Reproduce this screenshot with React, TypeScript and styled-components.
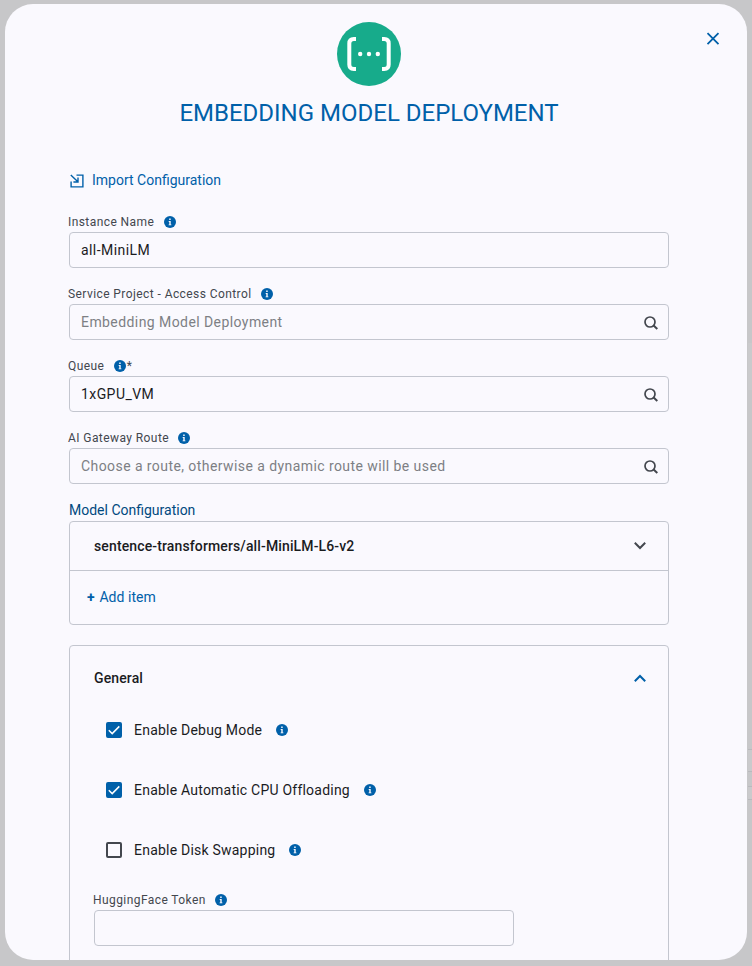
import React from "react";
import styled, { createGlobalStyle } from "styled-components";

const GlobalStyle = createGlobalStyle`
  * { box-sizing: border-box; }
  html, body { margin: 0; height: 966px; overflow: hidden; background: #c7c7ca; }
  body { font-family: Roboto, sans-serif; color: #1a1c1e; }
  svg { display: block; flex: none; }
`;

const Backdrop = styled.div`
  position: relative;
  height: 966px;
  padding: 4px 5px 6px;
  background: #c7c7c9;
`;

const PageStrip = styled.div<{ $top: number; $height: number; $lined?: boolean }>`
  position: absolute;
  right: 0;
  width: 4px;
  top: ${(p) => p.$top}px;
  height: ${(p) => p.$height}px;
  background: #cacacc;
  border: 0 solid #b9b9bd;
  border-width: ${(p) => (p.$lined ? "1px 0" : "0")};
`;

const Dialog = styled.main`
  position: relative;
  height: 956px;
  padding: 18px 78px 0 64px;
  border-radius: 28px;
  background: #faf9fe;
  overflow: hidden;
`;

const CloseButton = styled.button`
  position: absolute;
  top: 23px;
  right: 22px;
  padding: 0;
  border: 0;
  background: none;
  color: #0060a9;
`;

const Header = styled.header`
  display: flex;
  flex-direction: column;
  align-items: center;
`;

const Title = styled.h1`
  margin: 11px 0 0;
  font-size: 24px;
  line-height: 32px;
  font-weight: 400;
  color: #0060a9;
  white-space: nowrap;
`;

const ImportLink = styled.button`
  display: flex;
  align-items: center;
  height: 20px;
  margin: 41px 0 0;
  padding: 0 0 0 1px;
  gap: 8px;
  border: 0;
  background: none;
  font: 400 14px/20px Roboto, sans-serif;
  color: #0060a9;
  svg { margin-top: 2px; }
`;

const FieldGroup = styled.div<{ $first?: boolean; $width?: number }>`
  width: ${(p) => (p.$width ? `${p.$width}px` : "auto")};
  margin-top: ${(p) => (p.$first ? 24 : 18)}px;
`;

const Label = styled.div`
  display: flex;
  align-items: center;
  height: 16px;
  margin: 0 0 2px -1px;
  font-size: 12px;
  line-height: 16px;
  letter-spacing: 0.42px;
  color: #43474e;
  white-space: nowrap;
  svg { margin-left: 9.4px; }
`;

const Required = styled.span`
  margin-left: 1px;
`;

const InputBox = styled.div<{ $muted?: boolean }>`
  display: flex;
  align-items: center;
  justify-content: space-between;
  height: 36px;
  padding: 0 9px 0 11px;
  border: 1px solid #c3c6cf;
  border-radius: 4px;
  font-size: 14px;
  line-height: 20px;
  letter-spacing: 0.425px;
  color: ${(p) => (p.$muted ? "#7d7f84" : "#1a1c1e")};
  svg { margin-top: 1px; }
`;

const SectionTitle = styled.h2`
  margin: 16px 0 1px;
  font-size: 14px;
  line-height: 20px;
  font-weight: 400;
  color: #00497f;
`;

const Card = styled.section<{ $gap?: number }>`
  margin-top: ${(p) => p.$gap ?? 0}px;
  border: 1px solid #c3c6cf;
  border-radius: 4px;
`;

const CardHeader = styled.div<{ $height: number }>`
  display: flex;
  align-items: center;
  justify-content: space-between;
  height: ${(p) => p.$height}px;
  padding: 0 22px 0 24px;
  font-size: 14px;
  font-weight: 500;
  letter-spacing: 0.13px;
`;

const AddRow = styled.div`
  display: flex;
  align-items: center;
  height: 54px;
  padding: 0 17px 2px;
  border-top: 1px solid #c3c6cf;
  font-size: 14px;
  letter-spacing: 0.05px;
  color: #0060a9;
`;

const Plus = styled.span`
  width: 12.4px;
  font-weight: 700;
`;

const GeneralCard = styled(Card)`
  height: 380px;
`;

const Options = styled.div`
  display: flex;
  flex-direction: column;
  gap: 40px;
  padding: 10px 0 0 36px;
`;

const Option = styled.label`
  display: flex;
  align-items: center;
  height: 20px;
  font-size: 14px;
  letter-spacing: 0.22px;
  white-space: nowrap;
`;

const OptionText = styled.span`
  margin: 0 14px 0 12px;
`;

const Check = styled.span<{ $on?: boolean }>`
  display: grid;
  place-items: center;
  width: 16px;
  height: 16px;
  border-radius: 2px;
  border: 2px solid ${(p) => (p.$on ? "#0060a9" : "#43474e")};
  background: ${(p) => (p.$on ? "#0060a9" : "transparent")};
`;

const TokenArea = styled.div`
  padding: 14px 0 0 24px;
`;

const InfoIcon = () => (
  <svg width="12" height="12" viewBox="0 0 12 12">
    <circle cx="6" cy="6" r="6" fill="#0060a9" />
    <rect x="5.2" y="2.5" width="1.5" height="1.6" rx=".2" fill="#faf9fe" />
    <path d="M4.7 5.1h2v3.4h.7v.8H4.6v-.8h.7V5.9h-.6z" fill="#faf9fe" />
  </svg>
);

const SearchIcon = () => (
  <svg width="16" height="16" viewBox="0 0 16 16" fill="none" stroke="#43474e">
    <circle cx="7" cy="7" r="5" strokeWidth="1.7" />
    <path d="M10.6 10.6 14.3 14.1" strokeWidth="2" />
  </svg>
);

const Chevron = ({ up }: { up?: boolean }) => (
  <svg width="12" height="8" viewBox="0 0 12 8" fill="none">
    <path
      d={up ? "M.8 7.2 6 2 11.2 7.2" : "M.8 .8 6 6 11.2 .8"}
      stroke={up ? "#0060a9" : "#43474e"}
      strokeWidth="2"
    />
  </svg>
);

const Logo = () => (
  <svg width="64" height="64" viewBox="0 0 64 64">
    <circle cx="32" cy="32" r="32" fill="#17ab8b" />
    <path d="M19 17h-2.2q-4.5 0-4.5 4.5v21q0 4.5 4.5 4.5H19M45 17h2.2q4.5 0 4.5 4.5v21q0 4.5-4.5 4.5H45" fill="none" stroke="#fff" strokeWidth="4" />
    <g fill="#fff">
      <circle cx="23.2" cy="32" r="2.2" />
      <circle cx="32" cy="32" r="2.2" />
      <circle cx="40.8" cy="32" r="2.2" />
    </g>
  </svg>
);

const ImportIcon = () => (
  <svg width="14" height="14" viewBox="0 0 14 14" fill="none" stroke="#0060a9" strokeWidth="1.4">
    <path d="M6.5 1.1h6.4v11.8H1.1V7.4M.8.9 7.6 7.6M8 3.5V8H3.4" />
  </svg>
);

type FieldProps = {
  label: string;
  value?: string;
  muted?: boolean;
  search?: boolean;
  required?: boolean;
  first?: boolean;
  width?: number;
};

const Field = ({ label, value, muted, search, required, first, width }: FieldProps) => (
  <FieldGroup $first={first} $width={width}>
    <Label>
      {label}
      <InfoIcon />
      {required && <Required>*</Required>}
    </Label>
    <InputBox $muted={muted}>
      <span>{value}</span>
      {search && <SearchIcon />}
    </InputBox>
  </FieldGroup>
);

const options = [
  { text: "Enable Debug Mode", on: true },
  { text: "Enable Automatic CPU Offloading", on: true },
  { text: "Enable Disk Swapping", on: false },
];

export default function App() {
  return (
    <>
      <GlobalStyle />
      <Backdrop>
        <PageStrip $top={343} $height={47} />
        <PageStrip $top={749} $height={23} $lined />
        <PageStrip $top={786} $height={14} $lined />
        <Dialog>
          <CloseButton aria-label="Close">
            <svg width="24" height="24" viewBox="0 0 24 24" fill="none" stroke="currentColor" strokeWidth="1.8">
              <path d="m6.5 6.2 11 11m0-11-11 11" />
            </svg>
          </CloseButton>
          <Header>
            <Logo />
            <Title>EMBEDDING MODEL DEPLOYMENT</Title>
          </Header>
          <ImportLink>
            <ImportIcon />
            Import Configuration
          </ImportLink>
          <Field first label="Instance Name" value="all-MiniLM" />
          <Field label="Service Project - Access Control" value="Embedding Model Deployment" muted search />
          <Field label="Queue" value="1xGPU_VM" search required />
          <Field label="AI Gateway Route" value="Choose a route, otherwise a dynamic route will be used" muted search />
          <SectionTitle>Model Configuration</SectionTitle>
          <Card>
            <CardHeader $height={48}>
              sentence-transformers/all-MiniLM-L6-v2
              <Chevron />
            </CardHeader>
            <AddRow>
              <Plus>+</Plus>
              <span>Add item</span>
            </AddRow>
          </Card>
          <GeneralCard $gap={20}>
            <CardHeader $height={64}>
              General
              <Chevron up />
            </CardHeader>
            <Options>
              {options.map((o) => (
                <Option key={o.text}>
                  <Check $on={o.on}>
                    {o.on && (
                      <svg width="12" height="12" viewBox="0 0 12 12" fill="none" stroke="#fff" strokeWidth="1.5">
                        <path d="M.8 6.3 4.2 9.6 11.3 2.4" />
                      </svg>
                    )}
                  </Check>
                  <OptionText>{o.text}</OptionText>
                  <InfoIcon />
                </Option>
              ))}
            </Options>
            <TokenArea>
              <Field label="HuggingFace Token" width={420} />
            </TokenArea>
          </GeneralCard>
        </Dialog>
      </Backdrop>
    </>
  );
}
